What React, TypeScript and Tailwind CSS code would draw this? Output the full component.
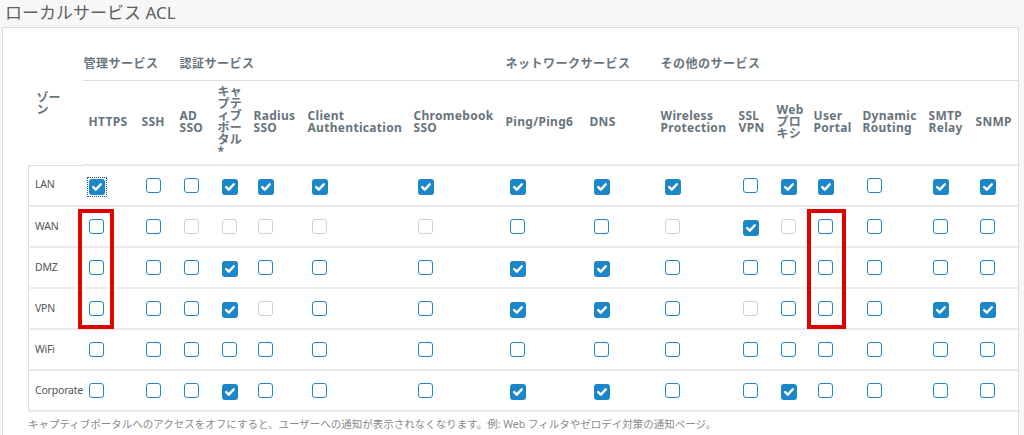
import React from "react";

type S = "c" | "u" | "d" | "f";

const cols: { w: string; label: React.ReactNode }[] = [
  { w: "w-[53px]", label: "HTTPS" },
  { w: "w-[38px]", label: "SSH" },
  { w: "w-[38px]", label: <>AD<br />SSO</> },
  { w: "w-[36px]", label: <>キャ<br />プテ<br />ィブ<br />ポー<br />タル<br />*</> },
  { w: "w-[54px]", label: <>Radius<br />SSO</> },
  { w: "w-[106px]", label: <>Client<br />Authentication</> },
  { w: "w-[92px]", label: <>Chromebook<br />SSO</> },
  { w: "w-[84px]", label: "Ping/Ping6" },
  { w: "w-[71px]", label: "DNS" },
  { w: "w-[78px]", label: <>Wireless<br />Protection</> },
  { w: "w-[38px]", label: <>SSL<br />VPN</> },
  { w: "w-[37px]", label: <>Web<br />プロ<br />キシ</> },
  { w: "w-[49px]", label: <>User<br />Portal</> },
  { w: "w-[66px]", label: <>Dynamic<br />Routing</> },
  { w: "w-[47px]", label: <>SMTP<br />Relay</> },
  { w: "w-[48px]", label: "SNMP" },
];

const rows: { name: string; s: S[] }[] = [
  { name: "LAN", s: ["f", "u", "u", "c", "c", "c", "c", "c", "c", "c", "u", "c", "c", "u", "c", "c"] },
  { name: "WAN", s: ["u", "u", "d", "d", "d", "d", "d", "u", "u", "d", "c", "d", "u", "u", "u", "u"] },
  { name: "DMZ", s: ["u", "u", "u", "c", "u", "u", "u", "c", "c", "u", "u", "u", "u", "u", "u", "u"] },
  { name: "VPN", s: ["u", "u", "u", "c", "d", "u", "u", "c", "c", "u", "d", "u", "u", "u", "c", "c"] },
  { name: "WiFi", s: ["u", "u", "u", "u", "u", "u", "u", "u", "u", "u", "u", "u", "u", "u", "u", "u"] },
  { name: "Corporate", s: ["u", "u", "u", "c", "u", "u", "u", "c", "c", "u", "u", "c", "u", "u", "u", "u"] },
];

function Box({ s }: { s: S }) {
  const checked = s === "c" || s === "f";
  const inner = checked ? (
    <span className="flex h-[16px] w-[16px] items-center justify-center rounded-[3px] bg-[#1b87c9]">
      <svg width="12" height="12" viewBox="0 0 11 11">
        <path d="M2 5.6 L4.4 7.9 L9 3" fill="none" stroke="#fff" strokeWidth="2.2" strokeLinecap="round" strokeLinejoin="round" />
      </svg>
    </span>
  ) : (
    <span
      className={
        "block h-[15px] w-[15px] rounded-[3px] border-[1.5px] bg-white " +
        (s === "d" ? "border-[#d2d2d2]" : "border-[#1b87c9]")
      }
    />
  );
  if (s === "f") {
    return <span className="inline-flex outline-1 outline-dotted outline-offset-1 outline-[#1b5f9a]">{inner}</span>;
  }
  return <span className="inline-flex">{inner}</span>;
}

export default function App() {
  const font = { fontFamily: '"Noto Sans", "Noto Sans CJK JP", sans-serif' };
  return (
    <div className="relative h-[435px] w-[1024px] overflow-hidden bg-[#f7f7f7]" style={font}>
      <div className="h-[27px] pl-[5px] pt-[1px] text-[17px] leading-[24px] text-[#5e5e5e]">ローカルサービス ACL</div>
      <div className="ml-[2px] w-[1017px] border border-[#dcdcdc] bg-white pl-[25px] pt-[16px] pb-[10px]">
        <table className="w-[989px] table-fixed border-collapse">
          <colgroup>
            <col className="w-[54px]" />
            {cols.map((c, i) => (
              <col key={i} className={c.w} />
            ))}
          </colgroup>
          <thead>
            <tr className="h-[36px]">
              <th rowSpan={2} className="border-b border-[#dedede] pl-[8px] text-left align-middle text-[12px] font-bold leading-[12px] text-[#67747c]">
                ゾー<br />ン
              </th>
              <th colSpan={2} className="border-b border-[#dedede] pl-[1px] pt-[4px] text-left align-middle text-[12px] font-bold tracking-[0.5px] text-[#67747c]">
                管理サービス
              </th>
              <th colSpan={5} className="border-b border-[#dedede] pl-[6px] pt-[4px] text-left align-middle text-[12px] font-bold tracking-[0.5px] text-[#67747c]">
                認証サービス
              </th>
              <th colSpan={2} className="border-b border-[#dedede] pl-[6px] pt-[4px] text-left align-middle text-[12px] font-bold tracking-[0.5px] text-[#67747c]">
                ネットワークサービス
              </th>
              <th colSpan={7} className="border-b border-[#dedede] pl-[6px] pt-[4px] text-left align-middle text-[12px] font-bold tracking-[0.5px] text-[#67747c]">
                その他のサービス
              </th>
            </tr>
            <tr className="h-[85px]">
              {cols.map((c, i) => (
                <th
                  key={i}
                  className="whitespace-nowrap border-b-2 border-[#ebebeb] pl-[6px] text-left align-middle text-[12px] font-bold leading-[12px] tracking-[0.3px] text-[#67747c]"
                >
                  {c.label}
                </th>
              ))}
            </tr>
          </thead>
          <tbody>
            {rows.map((r) => (
              <tr key={r.name} className="h-[41px] border-b-2 border-[#ebebeb]">
                <td className="whitespace-nowrap border-l border-[#dedede] pl-[6px] align-middle text-[10.5px] tracking-[-0.2px] text-[#555]">
                  {r.name}
                </td>
                {r.s.map((s, i) => (
                  <td key={i} className={(i === 0 ? "pl-[6px]" : "pl-[10px]") + " pt-[2px] align-middle leading-none"}>
                    <Box s={s} />
                  </td>
                ))}
              </tr>
            ))}
          </tbody>
        </table>
        <div className="pt-[4px] text-[10.5px] leading-[16px] text-[#8a8a8a]">
          キャプティブポータルへのアクセスをオフにすると、ユーザーへの通知が表示されなくなります。例: Web フィルタやゼロデイ対策の通知ページ。
        </div>
      </div>
      <div className="pointer-events-none absolute left-[78px] top-[209px] h-[120px] w-[36px] border-[4px] border-[#e00000]" />
      <div className="pointer-events-none absolute left-[807px] top-[209px] h-[120px] w-[39px] border-[4px] border-[#e00000]" />
    </div>
  );
}
